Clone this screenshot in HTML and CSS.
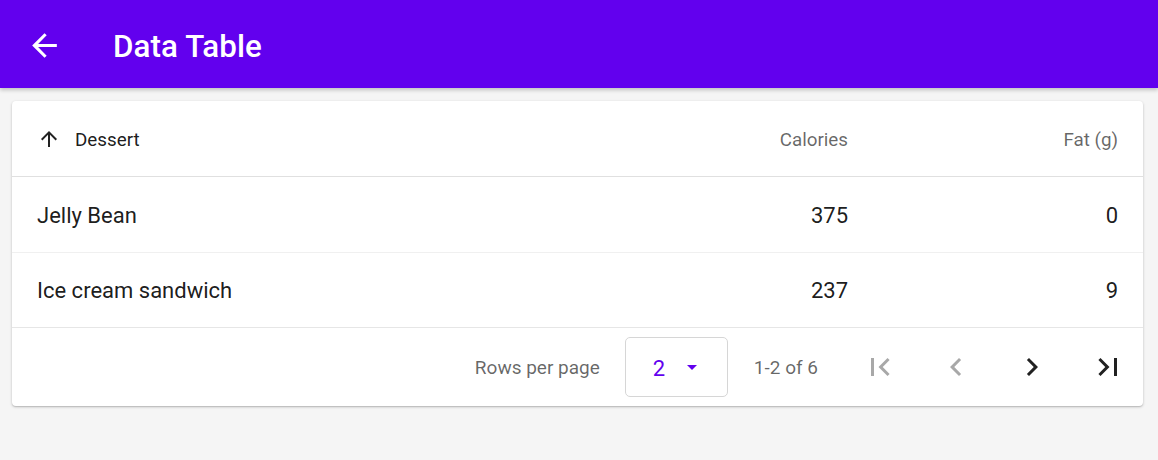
FILE: index.html
```html
<!DOCTYPE html>
<html>
<head>
<meta charset="utf-8">
<link rel="stylesheet" href="styles.css">
</head>
<body>
<header class="appbar">
  <svg class="back" viewBox="0 0 24 24"><path d="M20 11H7.83l5.59-5.59L12 4l-8 8 8 8 1.41-1.41L7.83 13H20v-2z"/></svg>
  <h1 class="title">Data Table</h1>
</header>
<main class="card">
  <div class="row head">
    <div class="cell first"><svg class="sort" viewBox="0 0 24 24"><path d="M4 12l1.41 1.41L11 7.83V20h2V7.83l5.58 5.59L20 12l-8-8-8 8z"/></svg><span class="dessert">Dessert</span></div>
    <div class="cell num muted">Calories</div>
    <div class="cell num muted">Fat (g)</div>
  </div>
  <div class="row data">
    <div class="cell">Jelly Bean</div>
    <div class="cell num">375</div>
    <div class="cell num">0</div>
  </div>
  <div class="row data">
    <div class="cell">Ice cream sandwich</div>
    <div class="cell num">237</div>
    <div class="cell num">9</div>
  </div>
  <div class="footer">
    <span class="label">Rows per page</span>
    <div class="select"><span class="value">2</span><svg class="drop" viewBox="0 0 24 24"><path d="M7 10l5 5 5-5z"/></svg></div>
    <span class="range">1-2 of 6</span>
    <div class="pager">
      <svg class="pg disabled" viewBox="0 0 24 24"><path d="M18.41 16.59L13.82 12l4.59-4.59L17 6l-6 6 6 6zM6 6h2v12H6z"/></svg>
      <svg class="pg disabled" viewBox="0 0 24 24"><path d="M15.41 7.41L14 6l-6 6 6 6 1.41-1.41L10.83 12z"/></svg>
      <svg class="pg" viewBox="0 0 24 24"><path d="M10 6L8.59 7.41 13.17 12l-4.58 4.59L10 18l6-6z"/></svg>
      <svg class="pg" viewBox="0 0 24 24"><path d="M5.59 7.41L10.18 12l-4.59 4.59L7 18l6-6-6-6zM16 6h2v12h-2z"/></svg>
    </div>
  </div>
</main>
</body>
</html>
```
FILE: styles.css
```css
* { box-sizing: border-box; }
html, body { margin: 0; padding: 0; }
body {
  background: #f5f5f5;
  font-family: Roboto, "Liberation Sans", sans-serif;
  color: rgba(0,0,0,0.9);
  height: 460px;
  overflow: hidden;
}
.appbar {
  height: 88px;
  background: #6200ee;
  display: flex;
  align-items: center;
  padding-left: 26px;
  box-shadow: 0 2px 4px rgba(0,0,0,0.22);
  position: relative;
  z-index: 1;
}
.back { width: 37px; height: 37px; fill: #fff; margin-top: 3px; }
.title {
  margin: 0 0 0 50px;
  color: #fff;
  font-size: 31.3px;
  font-weight: 500;
  letter-spacing: 0.1px;
  padding-top: 5px;
}
.card {
  margin: 13px 15px 0 12px;
  background: #fff;
  border-radius: 4px;
  box-shadow: 0 1px 3px rgba(0,0,0,0.2), 0 1px 1px rgba(0,0,0,0.1);
}
.row {
  display: grid;
  grid-template-columns: 1fr 270px 270px;
  padding: 0 25px;
  align-items: center;
}
.head {
  height: 76px;
  border-bottom: 1px solid #e0e0e0;
  font-size: 18.8px;
  padding-top: 2px;
}
.data {
  height: 75.5px;
  border-bottom: 1px solid #f0f0f0;
  font-size: 22px;
  padding-top: 2px;
}
.data + .data { border-bottom-color: #e6e6e6; }
.cell { white-space: nowrap; }
.first { display: flex; align-items: center; }
.sort { width: 24px; height: 24px; fill: rgba(0,0,0,0.87); margin-right: 14px; margin-top: -2px; }
.num { text-align: right; }
.muted { color: rgba(0,0,0,0.6); }
.footer {
  height: 78px;
  display: flex;
  align-items: center;
  justify-content: flex-end;
  padding-right: 17px;
  padding-top: 0;
  font-size: 19px;
  color: rgba(0,0,0,0.6);
}
.select {
  margin-left: 25px;
  width: 103px;
  height: 60px;
  border: 1px solid #d6d6d6;
  border-radius: 5px;
  display: flex;
  align-items: center;
  padding-left: 27px;
  padding-top: 2px;
}
.value { color: #6200ee; font-size: 22px; }
.drop { width: 24px; height: 24px; fill: #6200ee; margin-left: 15px; margin-top: -2px; }
.range { margin-left: 26px; }
.pager { display: flex; gap: 40px; margin-left: 44px; }
.pg { width: 36px; height: 36px; fill: rgba(0,0,0,0.87); }
.pg.disabled { fill: rgba(0,0,0,0.34); }
```
